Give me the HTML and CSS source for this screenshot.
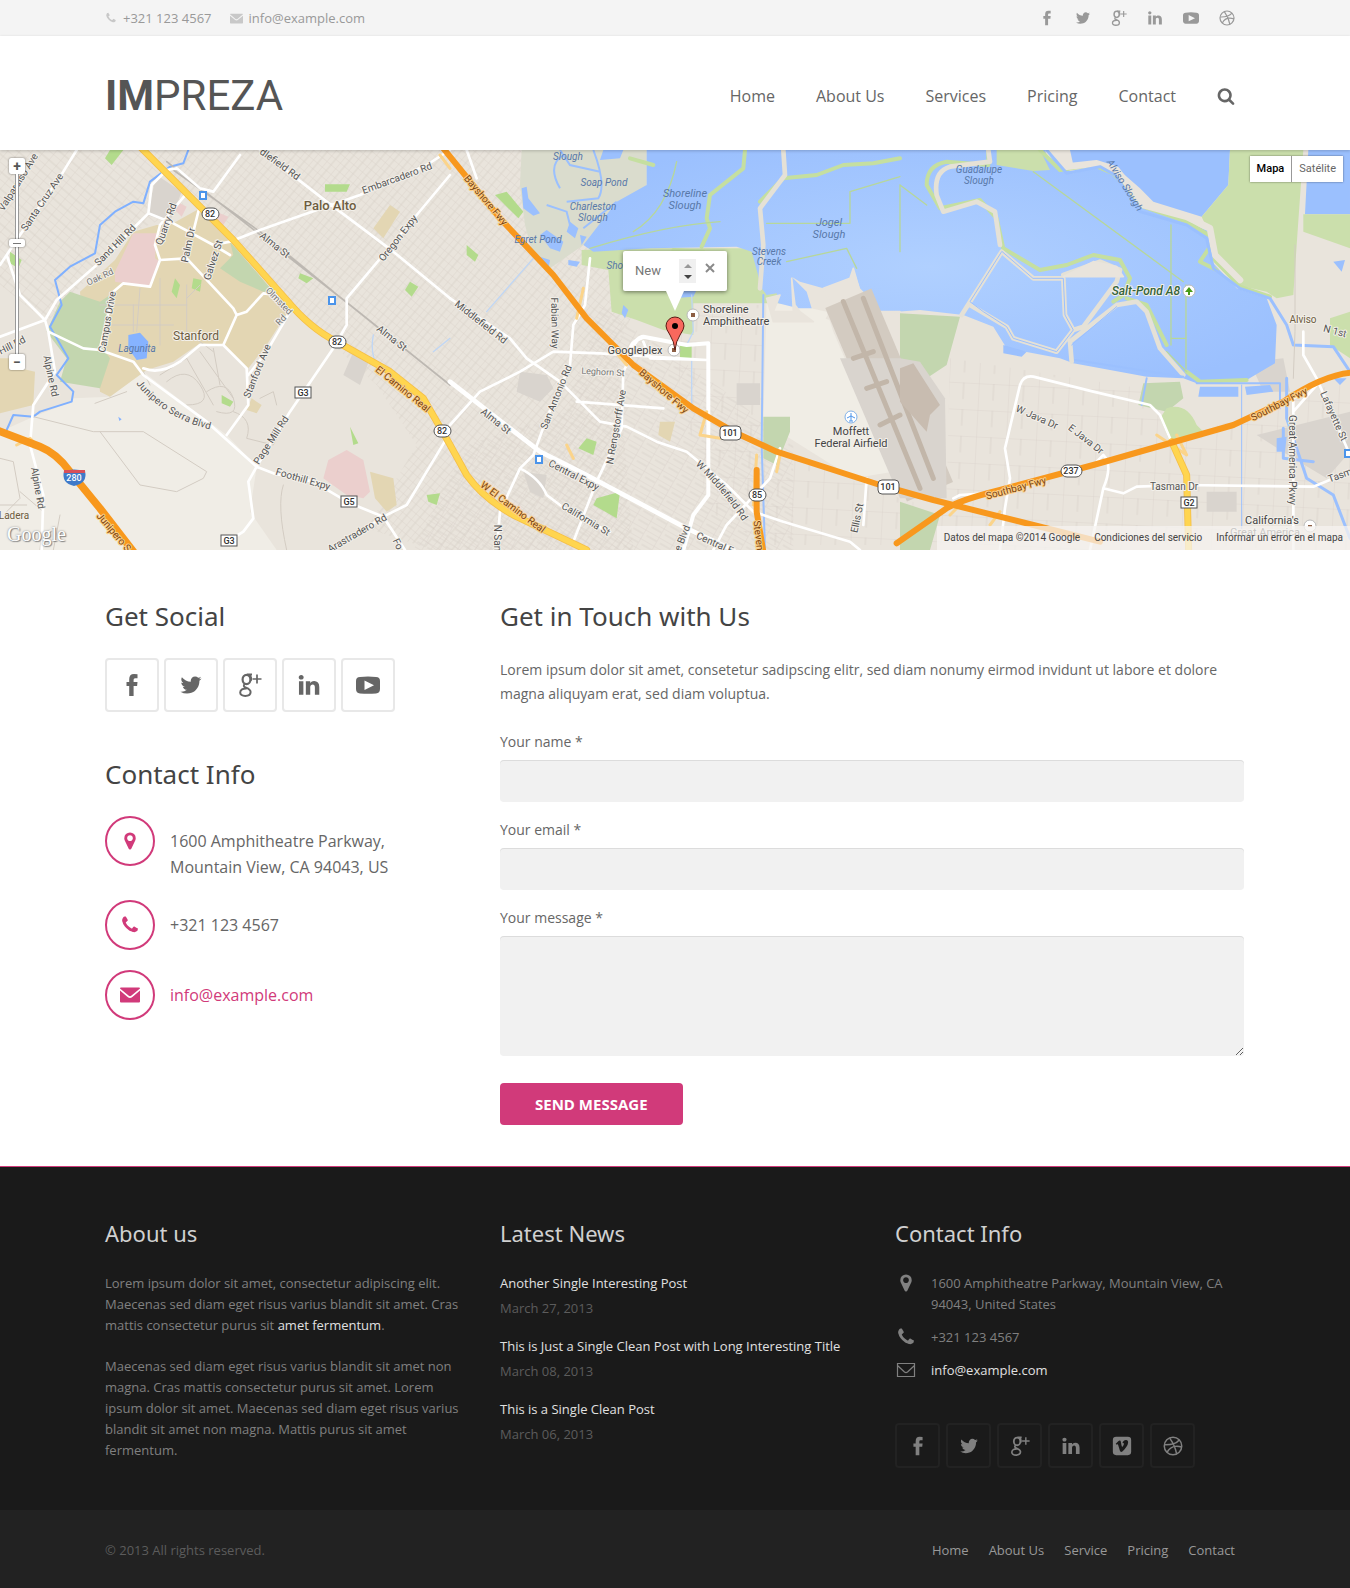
FILE: index.html
```html
<!DOCTYPE html>
<html lang="en">
<head>
<meta charset="utf-8">
<meta name="viewport" content="width=device-width, initial-scale=1">
<title>Contact - Impreza</title>
<link rel="stylesheet" href="styles.css">
</head>
<body>
<svg class="sprite" aria-hidden="true">
  <symbol id="i-facebook" viewBox="0 0 24 24"><path d="M17.500 1.200V5.200H15Q13.600 5.200 13.600 6.700V9H17.500L17.100 13H13.600V23H9.200V13H6.500V9H9.200V6.200Q9.200 1 14 1Q16.500 1 17.500 1.200Z"/></symbol>
  <symbol id="i-twitter" viewBox="0 0 1792 1792"><path d="M1684 408q-67 98-162 167 1 14 1 42 0 130-38 259.500t-115.500 248.500-184.500 210.500-258 146-323 54.500q-271 0-496-145 35 4 78 4 225 0 401-138-105-2-188-64.500t-114-159.500q33 5 61 5 43 0 85-11-112-23-185.500-111.500t-73.500-205.500v-4q68 38 146 41-66-44-105-115t-39-154q0-88 44-163 121 149 294.500 238.500t371.500 99.500q-8-38-8-74 0-134 94.500-228.500t228.500-94.500q140 0 236 102 109-21 205-78-37 115-142 178 93-10 186-50z"/></symbol>
  <symbol id="i-gplus" viewBox="0 0 24 24"><g fill="none" stroke="currentColor"><ellipse cx="8.500" cy="6.500" rx="3.900" ry="4.600" stroke-width="2.200"/><path d="M9 1.600h5M11 1.800c2 1.500 2.600 3.500 1.800 6M7 11c-2.200 1.600-1.200 2.700 1 3.600 3 1.200 4.600 2.200 4.600 4.400 0 2.400-2.200 3.900-5.400 3.900-3 0-5-1.300-5-3.500 0-2.600 2.600-4.200 6.600-4" stroke-width="2"/><path d="M19 1.500v9M14.500 6h9" stroke-width="1.700"/></g></symbol>
  <symbol id="i-linkedin" viewBox="0 0 1792 1792"><path d="M477 625v991h-330v-991h330zm21-306q1 73-50.500 122t-135.500 49h-2q-82 0-132-49t-50-122q0-74 51.500-122.500t134.500-48.500 133 48.500 51 122.500zm1166 729v568h-329v-530q0-105-40.500-164.500t-126.500-59.500q-63 0-105.500 34.500t-63.500 85.500q-11 30-11 81v553h-329q2-399 2-647t-1-296l-1-48h329v144h-2q20-32 41-56t56.500-52 87-43.500 114.500-15.500q171 0 275 113.500t104 332.500z"/></symbol>
  <symbol id="i-youtube" viewBox="0 0 24 24"><path fill-rule="evenodd" d="M4 4Q12 3 20 4Q24 4 24 8V16Q24 20 20 20.500Q12 21 4 20.500Q0 20 0 16V8Q0 4 4 4ZM8.500 7.500V17L18 12.200Z"/></symbol>
  <symbol id="i-dribbble" viewBox="0 0 24 24"><g fill="none" stroke="currentColor" stroke-width="1.800"><circle cx="12" cy="12" r="10.500"/><path d="M8 2.500C12 8 15 14 16.300 21.500M1.800 10.500C9 10.700 16 9 19.500 4.700M5 19.500C8 13 15 11 22.500 13.200"/></g></symbol>
  <symbol id="i-vimeo" viewBox="0 0 24 24"><path fill-rule="evenodd" d="M5 1H19Q23 1 23 5V19Q23 23 19 23H5Q1 23 1 19V5Q1 1 5 1ZM4.500 9.200L5.400 10.400C6.500 9.600 7 9.700 7.500 11.200L9.400 17.500C10 19.300 11.200 19.600 12.800 18.200C16 15.500 19 11.500 19.300 8.200C19.500 5.600 18.500 4.600 16.700 4.700C14.500 4.800 12.900 6.200 12.500 8.600C14.200 7.900 14.800 9 13.900 10.900C12.600 13.600 12 13.700 11.400 11.200L10.600 7C10.200 5.100 9 4.700 7.500 6.300Z"/></symbol>
  <symbol id="i-phone" viewBox="0 0 1792 1792"><path d="M1600 1240q0 27-10 70.500t-21 68.500q-21 50-122 106-94 51-186 51-27 0-52.500-3.500t-57.500-12.500-47.500-14.500-55.500-20.500-49-18q-98-35-175-83-128-79-264.500-215.500t-215.500-264.500q-48-77-83-175-3-9-18-49t-20.500-55.500-14.500-47.500-12.500-57.500-3.500-52.500q0-92 51-186 56-101 106-122 25-11 68.500-21t70.500-10q14 0 21 3 18 6 53 76 11 19 30 54t35 63.500 31 53.500q3 4 17.500 25t21.500 35.500 7 28.500q0 20-28.500 50t-62 55-62 53-28.500 46q0 9 5 22.500t8.500 20.500 14 24 11.500 19q76 137 174 235t235 174q2 1 19 11.500t24 14 20.500 8.500 22.500 5q18 0 46-28.500t53-62 55-62 50-28.500q14 0 28.500 7t35.500 21.500 25 17.500q25 15 53.500 31t63.500 35 54 30q70 35 76 53 3 7 3 21z"/></symbol>
  <symbol id="i-envelope" viewBox="0 0 20 20"><path d="M1 2.500H19Q20 2.500 20 3.500L11.500 10.600Q10 11.800 8.500 10.600L0 3.500Q0 2.500 1 2.500ZM0 5.600L7.600 12Q10 13.800 12.400 12L20 5.600V16.500Q20 17.500 19 17.500H1Q0 17.500 0 16.500Z"/></symbol>
  <symbol id="i-envelope-o" viewBox="0 0 20 20"><path d="M1.500 3.500H18.500V16.500H1.500ZM1.500 5.500L8.500 12Q10 13.200 11.500 12L18.500 5.500" fill="none" stroke="currentColor" stroke-width="1.200"/></symbol>
  <symbol id="i-marker" viewBox="0 0 1792 1792"><path d="M1152 640q0-106-75-181t-181-75-181 75-75 181 75 181 181 75 181-75 75-181zm256 0q0 109-33 179l-364 774q-16 33-47.500 52t-67.500 19-67.500-19-46.500-52l-365-774q-33-70-33-179 0-212 150-362t362-150 362 150 150 362z"/></symbol>
  <symbol id="i-search" viewBox="0 0 1792 1792"><path d="M1216 832q0-185-131.500-316.500t-316.500-131.500-316.500 131.500-131.500 316.500 131.500 316.500 316.500 131.500 316.500-131.500 131.500-316.500zm512 832q0 52-38 90t-90 38q-54 0-90-38l-343-342q-179 124-399 124-143 0-273.500-55.500t-225-150-150-225-55.500-273.500 55.500-273.500 150-225 225-150 273.500-55.500 273.500 55.500 225 150 150 225 55.500 273.500q0 220-124 399l343 343q37 37 37 90z"/></symbol>
</svg>

<div class="topbar">
  <div class="container topbar-row">
    <ul class="topbar-contacts">
      <li><svg class="icon icon-xs"><use href="#i-phone"/></svg><span>+321 123 4567</span></li>
      <li><svg class="icon icon-sm"><use href="#i-envelope"/></svg><a href="mailto:info@example.com">info@example.com</a></li>
    </ul>
    <ul class="topbar-social">
      <li><a href="#" aria-label="Facebook"><svg class="icon icon-md"><use href="#i-facebook"/></svg></a></li>
      <li><a href="#" aria-label="Twitter"><svg class="icon icon-md"><use href="#i-twitter"/></svg></a></li>
      <li><a href="#" aria-label="Google+"><svg class="icon icon-md"><use href="#i-gplus"/></svg></a></li>
      <li><a href="#" aria-label="LinkedIn"><svg class="icon icon-md"><use href="#i-linkedin"/></svg></a></li>
      <li><a href="#" aria-label="YouTube"><svg class="icon icon-md"><use href="#i-youtube"/></svg></a></li>
      <li><a href="#" aria-label="Dribbble"><svg class="icon icon-md"><use href="#i-dribbble"/></svg></a></li>
    </ul>
  </div>
</div>

<header class="header">
  <div class="container header-row">
    <a class="logo" href="#"><b>IM</b>PREZA</a>
    <nav class="nav" aria-label="Main">
      <a href="#">Home</a>
      <a href="#">About Us</a>
      <a href="#">Services</a>
      <a href="#">Pricing</a>
      <a href="#">Contact</a>
      <button class="search" type="button" aria-label="Search"><svg class="icon icon-search"><use href="#i-search"/></svg></button>
    </nav>
  </div>
</header>

<section class="map" aria-label="Map">
  <svg class="map-canvas" viewBox="0 0 1350 400" preserveAspectRatio="xMidYMid slice">
    <defs>
      <pattern id="gridA" width="34" height="22" patternUnits="userSpaceOnUse" patternTransform="rotate(40)"><path d="M0 0H34M0 0V22M17 0V22" class="street"/></pattern>
      <pattern id="gridB" width="46" height="30" patternUnits="userSpaceOnUse" patternTransform="rotate(30)"><path d="M0 0H46M0 0V30M12 15H46" class="street"/></pattern>
      <pattern id="gridC" width="90" height="80" patternUnits="userSpaceOnUse" patternTransform="rotate(3)"><path d="M0 0H90M0 0V80M45 0V50" class="street"/></pattern>
      <pattern id="gridD" width="40" height="28" patternUnits="userSpaceOnUse" patternTransform="rotate(-50)"><path d="M0 0H40M0 0V28M20 0V28" class="street"/></pattern>
      <radialGradient id="pond" cx="50%" cy="50%" r="60%"><stop offset="0" stop-color="#b0d0ff"/><stop offset="1" stop-color="#9bc0fe"/></radialGradient>
      <path id="serra" d="M139 231Q165 264 212 276"/>
      <path id="middle" d="M698 312Q722 334 746 369"/>
    </defs>
    <rect width="1350" height="400" fill="#e9e4dc"/>
    <g transform="scale(.33333) translate(0 -15)">
      <path fill="url(#gridD)" d="M0 15H420L560 190 400 260 140 530 0 420Z"/>
      <path fill="url(#gridA)" d="M450 15H1560L1900 500 1850 620 1900 1215H1300L1100 1150 1250 900 1130 720 870 480Z"/>
      <path fill="url(#gridB)" d="M1800 480L2150 720 2380 900V1215H1240L1400 900 1700 800Z"/>
      <path fill="url(#gridC)" d="M1980 480H2290V900L2380 940 2700 1060 3200 1200H2300L2130 1100ZM2850 640L3420 730 3600 860 4050 700V1215H3000L2840 1060Z"/>
      <path fill="#f0ede6" d="M220 760L330 755 430 680 560 780 680 870 770 965 750 1100 830 1215H0V860L100 815 215 770Z"/>
      <path fill="#f0ede5" d="M2300 460L2480 500 2500 560 2560 700 2680 980 2560 1000 2290 830Z"/>
      <path fill="#e3d6b3" d="M600 190L690 290 820 440 870 490 800 600 745 670 670 600 600 595 520 650 440 675 330 755 300 740 290 600 250 560 240 440 345 345 400 260 470 240 510 240ZM0 640H40L60 670 105 680 100 780 0 805ZM755 760L785 780 770 805 740 795ZM1110 980L1180 1000 1190 1080 1160 1100 1125 1060ZM1170 180L1200 200 1150 280 1120 250ZM1980 830H2025L2010 890 1975 870Z"/>
      <path fill="#ebcfcd" d="M400 265L470 265 465 340 480 350 445 425 345 410V380ZM1040 915L1090 945 1110 1040 1090 1060 1040 1050 970 1000 985 945ZM540 175L560 185 545 215 525 195ZM660 205L685 215 670 240 650 225Z"/>
      <path fill="#d9d4ce" d="M470 90L545 140 510 230 440 210ZM1060 620L1110 640 1080 720 1030 690ZM1560 680L1640 690 1660 730 1620 770 1550 740ZM2210 715H2280V780H2210ZM3770 870L4050 800V920L3980 1000 3880 940ZM3750 650L3850 640 3870 740 3790 740ZM3620 1040H3710V1100H3620ZM1570 980L1640 990 1630 1060 1590 1040Z"/>
      <path fill="#c3d6af" d="M180 470L210 440 300 470 345 440 300 600 330 640 300 730 180 710 200 640 140 560ZM690 290L820 440 790 440 720 410 660 370 700 330ZM2290 815H2370V860L2330 960 2290 940ZM2700 505L2880 515 2840 660 2780 700 2700 640ZM3430 715L3540 710 3550 760 3500 800 3415 780ZM2700 1070L2820 1110 2790 1215H2700Z"/>
      <path fill="#b3db8c" d="M525 400L540 420 530 460 515 440ZM330 15H370L335 60 315 40ZM580 400L605 405 600 440 575 430ZM900 385L940 400 920 415 895 400ZM1230 410L1255 425 1235 455 1215 435ZM975 118H1050L1040 140 975 140ZM1050 845L1075 895 1060 900ZM665 750L700 770 690 785 665 775ZM1485 150L1520 140 1570 200 1555 220ZM1400 300L1435 330 1425 350 1400 330ZM1760 880L1790 890 1780 930 1735 910ZM1790 1060L1860 1040 1850 1120 1780 1080ZM30 320L65 345 55 370 30 355ZM1280 1050L1320 1045 1310 1080 1285 1070ZM2040 600H2075V640H2040Z"/>
      <path fill="#cbdfac" d="M1745 315L1850 310 2350 310 2390 440 2370 475H2080V570L1990 555 1910 525 1835 500 1825 375 1745 360ZM3500 790Q3560 770 3590 840L3620 870 3510 890 3480 820Z"/>
      <path fill="#dadccd" d="M1565 15H1940V120L1750 300 1650 370 1600 330 1575 240 1560 120Z"/>
      <path fill="#9bc0fe" d="M1565 130L1580 125 1585 160 1620 205 1600 212 1570 190ZM1620 270L1640 255 1690 290 1680 320 1650 310ZM1710 230L1735 250 1725 280 1700 260ZM1740 270L1760 275 1745 300ZM1810 15H1870L1860 40 1800 45ZM1620 335L1650 345 1645 375 1625 360ZM1705 345L1740 350 1730 365 1705 360ZM1870 480L1885 495 1875 520 1865 505ZM2020 440L2090 435 2080 455 2020 460Z"/>
      <path fill="none" stroke="#9bc0fe" stroke-width="6" d="M1780 15Q1820 120 1795 160L1700 170M1680 15L1710 60 1800 80M1750 250L1850 170M1690 30Q1640 60 1680 130M1640 180L1700 200 1710 240"/>
      <path fill="url(#pond)" d="M1940 15V120L1850 170 1750 300 1780 320 1950 310 2210 305 2255 320 2285 430 2300 450 2330 445 2335 475 2395 490 2435 490 2420 440 2375 395 2400 410 2470 430 2550 405 2560 370 2580 430 2620 470 2630 505 2760 495 2890 510 2980 545 3020 610 3180 640 3220 655 3440 695 3550 700 3590 715 3740 705 3825 655 3830 540 3800 460 3710 430 3640 355 3630 260 3580 240 3430 190 3350 80 3300 60 3220 85 3140 30 3135 15Z"/>
      <path fill="#9bc0fe" d="M3210 15H3690L3685 120 3605 215 3460 170 3420 130 3340 60 3220 60ZM3925 15H4050V208H3915ZM3600 725H3715V755H3595ZM3735 725L3810 720 3820 740 3740 750ZM3010 600L3080 620 3065 635 3010 625ZM4000 350L4035 345 4025 380ZM3830 880L3860 875 3855 920 3830 920ZM4000 700L4040 700 4020 720Z"/>
      <path fill="#cbdfac" d="M3690 15H3910L3890 300 3880 450 3830 460 3800 440 3710 420 3640 350 3630 270 3605 215 3685 120ZM3910 208H4050V310L3910 260ZM2990 15H3120L3150 75 3100 78 2990 60ZM3990 520L4050 500V640L3990 600Z"/>
      <g fill="none" stroke-linejoin="round" stroke-linecap="round">
        <g stroke="#c5dfa0" stroke-width="12">
          <path d="M3120 15L3180 75 3280 60 3340 85 3430 185 3560 230 3635 275 3645 345 3720 425 3810 455M3640 290L3600 350 3650 375"/>
          <path d="M2965 15V60L2840 50Q2780 60 2780 120L2820 190 2940 165 2990 220 3010 310 3120 375 3200 360 3280 330 3360 345 3390 400 3370 450 3340 470M3380 460L3440 480 3480 560 3500 600"/>
          <path d="M2235 15L2230 70 2130 150 2120 220 2130 250 2105 305M1890 40L1960 60M2280 170L2350 100 2450 90 2530 60 2620 55 2700 40"/>
          <path d="M2110 320L2020 315M3560 680L3600 710 3740 705"/>
        </g>
        <g stroke="#b7d79a" stroke-width="4">
          <path d="M2700 120L2780 180M3100 80L3550 410M3513 240V600M3558 420V670M3513 580H3558M2550 235V140L2700 95M2300 235H2550M2700 120V320M2360 350L2540 310 2570 370M2160 230Q2000 240 1770 310M2030 50Q2000 200 1900 260M3500 620L3560 680"/>
        </g>
        <path stroke="#e9e4dc" stroke-width="20" d="M3150 15L3200 65 3290 55 3350 75 3430 180 3560 215 3630 250 3645 330 3720 405"/>
        <path stroke="#9bc0fe" stroke-width="9" d="M3140 15L3200 85 3300 65 3345 90 3420 200 3560 240 3620 280 3640 370 3720 430 3810 460 3860 540 3880 600 4000 605 4050 680M3860 700V820L3920 1000 4000 1050 4050 1180M3850 850V940L3940 950"/>
        <g stroke="#e5e1d6" stroke-width="14">
          <path d="M2350 15L2355 90 2280 190 2290 300 2280 430M2965 15L2970 50 2850 65Q2800 80 2810 150L2830 200 2930 170 2985 200 3000 300"/>
          <path d="M3005 320L2910 470 2885 510M3005 320L3100 400 3190 400 3195 510 3220 555 3170 620 3040 580 3020 545 2910 480M3220 555L3250 545 3350 410M3350 480L3410 470 3440 500 3480 610 3550 690M3350 480L3210 590 3215 650M3190 390L3300 350 3360 375 3350 410"/>
        </g>
        <g stroke="#9bc0fe" stroke-width="3">
          <path d="M3005 320L2910 470 2950 500 3020 545 3040 580 3170 620 3220 555 3195 510 3190 400 3100 400ZM3215 600L3350 485M3725 720V1190"/>
        </g>
        <path fill="#e9e4dc" stroke="#e9e4dc" stroke-width="5" d="M3190 395L3280 350 3350 365 3370 395ZM2300 460L2340 450 2320 500 2400 500 2440 530 2320 530ZM2375 400L2385 480 2400 500 2380 500ZM2470 430L2550 400 2560 370 2580 440 2630 500 2700 500 2600 560 2480 520 2500 490Z"/>
        <path stroke="#d3cbc1" stroke-width="150" stroke-linecap="butt" d="M2545 460L2790 1040"/>
        <path fill="#d9d4ce" stroke="none" d="M2520 640L2700 1060 2840 1060 2835 760 2760 650 2700 640Z"/>
        <path stroke="#c2b6a9" stroke-width="15" d="M2530 470L2760 1030M2590 460L2800 1000M2560 640L2620 620M2600 730L2660 710M2640 840L2700 810"/>
        <path fill="#c8bcb0" stroke="none" d="M2700 670L2740 655 2820 780 2790 810 2780 860 2700 770Z"/>
        <g stroke="#7fb0ff" stroke-width="6">
          <path d="M565 15L550 55 510 65 450 110 430 175 400 170 345 200 300 240 285 325 210 365 165 405 185 480 150 545 205 640 170 690 220 740 215 770 120 800 100 815 40 810 20 855"/>
          <path d="M2290 450L2285 900 2295 1215M3440 700L3425 780M3225 645L3550 695M3590 715H3840V790" stroke="#9bc0fe"/>
          <path d="M2075 450L2080 560 2060 600M1120 570Q1110 620 1130 660M1300 620L1350 580M2075 640V780M1460 500L1600 340" stroke="#bfd6f5" stroke-width="4"/>
        </g>
        <path fill="#86b3ff" stroke="none" d="M385 570L420 563 445 590 440 640 410 645 385 610ZM355 815L365 823 358 828Z"/>
        <g stroke="#d3ccc3" stroke-width="3">
          <path d="M285 775L380 740M100 815L280 860 430 860 620 980 610 1000 530 1040 420 1020 300 860M450 720L430 680M500 710Q560 660 600 720T560 780M620 740Q680 700 700 760T650 800M700 800Q760 820 740 880L820 900 860 820M480 690L560 640M600 620L700 760M640 610L660 720M560 640L640 780M780 760L820 740 830 780M0 940L40 950 60 1060 20 1100M60 1040L130 1100 120 1215M180 1110L160 1215M850 1020Q830 1080 860 1215M0 1080H80"/>
          <path d="M300 480H560M320 540H520M480 400V600M400 480V560M560 420V560L640 620M600 420L560 460M420 430L410 560"/>
          <path d="M500 50L1050 480 1350 720M520 75L780 260 1000 440" stroke-width="5" stroke="#bdb8b2"/>
          <path d="M3885 300V560L3880 700"/>
        </g>
        <g stroke="#fff" stroke-width="8">
          <path d="M230 15L190 80 60 270 0 360M0 575L135 525 170 465 290 360 410 240 445 205 455 120 500 75 530 70 600 130 640 140 720 30M445 205L520 235 640 300 690 290 780 255 880 220 1080 150 1280 60 1350 15M20 330L60 450 135 525 145 560 250 610 300 615 400 650 430 690 620 830 770 965 820 985 940 1010 1050 1075 1150 1115 1215 1215M560 145L480 240 465 300 480 345 560 340 700 490 710 510 670 600 740 670 745 780 680 870M480 345L450 425 370 415 340 440 300 610M580 260L600 180M690 330L640 300M710 510L740 500 790 445 830 450M430 670Q480 690 540 650L600 600 670 600M870 500L800 620 745 690M1040 460V540L1000 610 870 800 770 965 745 1010 760 1120 730 1160 690 1185M1350 90L1200 270 1040 460M145 560L165 680 100 780 90 900 130 1050 125 1215M1340 880L1220 1080 1150 1115 1000 1215M780 15L980 170 1180 320 1350 460"/>
          <path d="M1350 460L1530 580 1580 640 1680 710 1740 770 1800 830 1880 845 1970 890 2060 920 2180 1020 2260 1100 2350 1130 2550 1190 2580 1215M1350 840L1440 740 1560 680 1660 620 1800 625 2120 645M1770 340L1755 480 1720 540 1710 660 1640 820 1600 930 1560 970 1500 1100 1490 1215M1560 970Q1620 1000 1640 1050L1720 1110 1830 1160M1870 680L1865 850 1790 1010 1720 1190M1730 770L1990 790M1400 15L1430 100M1925 580Q1880 590 1890 640L1865 690M1930 590L1950 640 2120 645M2340 910L2310 1000 2180 1140 2140 1215M2590 1140L2600 1000"/>
          <path d="M1890 620Q1910 575 1930 575L2060 600 2125 595V1050L2080 1110 2050 1215" stroke-width="12"/>
          <path d="M1350 710L1620 920 1750 985 2060 1150 2200 1215" stroke-width="14"/>
          <path d="M3000 1215L3015 1090 3030 1000 3015 910 3060 720Q3070 690 3100 695L3280 740 3450 780 3480 810 3510 880M3290 950L3310 930Q3340 960 3310 1030L3270 1215M3310 1030L3370 1045 3410 1025 3550 1020 3940 1025 4050 980M2860 1060L2880 1050 2960 1045M3910 560V630L3950 700 4050 930M3880 1215V760L3950 710M3950 720L3880 800"/>
        </g>
        <g stroke="#fbd48a" stroke-width="9"><path d="M50 900L90 880 120 910M1750 430L1730 520M1830 600L1880 660M2120 800L2100 870 2160 880M2270 930L2260 1080M2340 930L2330 980M3470 870L3560 930 3530 870M2850 1110L2900 1060M3000 1100L2970 1140M1700 900L1720 940M1320 30L1350 70"/></g>
        <path stroke="#f5bf48" stroke-width="21" d="M415 0L700 285 860 465Q930 550 1010 590L1170 680 1270 760 1345 890 1400 990Q1450 1060 1540 1110L1760 1215M3515 890L3560 990 3566 1215"/>
        <path stroke="#ffd54f" stroke-width="16" d="M415 0L700 285 860 465Q930 550 1010 590L1170 680 1270 760 1345 890 1400 990Q1450 1060 1540 1110L1760 1215M3515 890L3560 990 3566 1215"/>
        <g stroke="#f8981d" stroke-width="18">
          <path d="M1330 10L1500 220 1660 390 1760 520 1900 660 2080 790 2200 860 2330 920 2640 1020 2800 1065 3100 1140 3300 1190M2690 1195L2840 1090Q2880 1065 3000 1035L3280 960 3700 840 3850 770Q3970 690 4055 683M2270 975V1100L2290 1220"/>
          <path stroke-width="23" d="M-10 855L120 905Q170 925 210 980L300 1090 400 1220"/>
        </g>
      </g>
    </g>

    <!-- road shields and place pins -->
    <g class="shields">
      <g fill="#fff" stroke="#555">
        <rect x="202" y="58" width="17" height="12" rx="6"/><rect x="329" y="186" width="17" height="12" rx="6"/><rect x="434" y="275" width="17" height="12" rx="6"/><rect x="749" y="339" width="17" height="12" rx="6"/><rect x="1061" y="315" width="21" height="12" rx="6"/>
        <rect x="720" y="276" width="21" height="14" rx="4"/><rect x="878" y="330" width="21" height="14" rx="4"/>
        <rect x="295" y="237" width="16" height="11"/><rect x="341" y="346" width="16" height="11"/><rect x="221" y="385" width="16" height="11"/><rect x="1181" y="347" width="16" height="11"/>
      </g>
      <path d="M64 321Q74 318 85 321Q88 333 74 336Q61 333 64 321Z" fill="#3f7ac9"/><path d="M64 320H85V323H64Z" fill="#d9505a"/>
      <text x="210" y="64">82</text><text x="337" y="192">82</text><text x="442" y="281">82</text><text x="757" y="345">85</text><text x="1071" y="321">237</text><text x="730" y="283">101</text><text x="888" y="337">101</text><text x="303" y="243">G3</text><text x="349" y="352">G5</text><text x="229" y="391">G3</text><text x="1189" y="353">G2</text><text x="74" y="328" class="on-blue">280</text>
      <g fill="#fff" stroke="#4b94ea" stroke-width="2"><rect x="200" y="42" width="6" height="7"/><rect x="329" y="147" width="6" height="7"/><rect x="536" y="306" width="6" height="7"/><rect x="1345" y="300" width="6" height="7"/></g>
      <g fill="#fff" stroke="#bbb"><circle cx="693" cy="165" r="6"/><circle cx="674" cy="200" r="6"/><circle cx="1189" cy="141" r="6"/><circle cx="1310" cy="376" r="6"/><circle cx="851" cy="267" r="6" stroke="#7fb0e8"/></g>
      <path d="M691 163h4v4h-4zM672 198h4v4h-4zM1308 375h4v2h-4z" fill="#8d5f45"/>
      <path d="M1189 137l4 5h-3v3h-2v-3h-3z" fill="#4a9b18"/>
      <path d="M851 263v8M847 268l4-2 4 2M849 271h4" stroke="#4b94ea" fill="none"/>
    </g>

    <g class="labels">
      <text transform="translate(18 32) rotate(-58)">Valparaiso Ave</text>
      <text transform="translate(42 52) rotate(-56)">Santa Cruz Ave</text>
      <text transform="translate(115 95) rotate(-45)">Sand Hill Rd</text>
      <text class="minor" transform="translate(100 127) rotate(-25)">Oak Rd</text>
      <text transform="translate(166 74) rotate(-70)">Quarry Rd</text>
      <text transform="translate(188 95) rotate(-78)">Palm Dr</text>
      <text transform="translate(213 110) rotate(-72)">Galvez St</text>
      <text transform="translate(107 172) rotate(-80)">Campus Drive</text>
      <text transform="translate(397 28) rotate(-20)">Embarcadero Rd</text>
      <text transform="translate(280 14) rotate(36)">dlefield Rd</text>
      <text transform="translate(398 88) rotate(-52)">Oregon Expy</text>
      <text transform="translate(275 95) rotate(38)">Alma St</text>
      <text transform="translate(392 188) rotate(38)">Alma St</text>
      <text class="minor" transform="translate(279 151) rotate(46)">Olmsted</text>
      <text class="minor" transform="translate(281 170) rotate(-45)">Rd</text>
      <text transform="translate(257 221) rotate(-68)">Stanford Ave</text>
      <text transform="translate(271 290) rotate(-57)">Page Mill Rd</text>
      <text transform="translate(303 329) rotate(16)">Foothill Expy</text>
      <text transform="translate(51 226) rotate(78)">Alpine Rd</text>
      <text transform="translate(38 338) rotate(80)">Alpine Rd</text>
      <text transform="translate(12 195) rotate(-27)">Hill Rd</text>
      <text transform="translate(357 383) rotate(-30)">Arastradero Rd</text>
      <text transform="translate(398 394) rotate(65)">Fo</text>
      <text class="flow"><textPath href="#serra">Junipero Serra Blvd</textPath></text>
      <text class="hwy" transform="translate(403 239) rotate(39)">El Camino Real</text>
      <text class="hwy" transform="translate(114 382) rotate(50)">Junipero S</text>
      <text class="town" x="330" y="55">Palo Alto</text>
      <text class="town light" x="196" y="186">Stanford</text>
      <text class="town small" x="14" y="365">Ladera</text>
      <text class="water" x="137" y="198">Lagunita</text>

      <text class="water" x="568" y="6">Slough</text>
      <text class="water" x="604" y="32">Soap Pond</text>
      <text class="water" x="593" y="56">Charleston</text><text class="water" x="593" y="67">Slough</text>
      <text class="water big" x="685" y="43">Shoreline</text><text class="water big" x="685" y="55">Slough</text>
      <text class="water big" x="829" y="72">Jogel</text><text class="water big" x="829" y="84">Slough</text>
      <text class="water" x="538" y="89">Egret Pond</text>
      <text class="water" x="769" y="101">Stevens</text><text class="water" x="769" y="111">Creek</text>
      <text class="water" x="619" y="115">Shore</text>
      <text class="hwy" transform="translate(486 50) rotate(50)">Bayshore Fwy</text>
      <text class="hwy" transform="translate(664 241) rotate(41)">Bayshore Fwy</text>
      <text class="hwy" transform="translate(513 357) rotate(37)">W El Camino Real</text>
      <text class="hwy" transform="translate(759 388) rotate(83)">Stevens</text>
      <text transform="translate(481 172) rotate(38)">Middlefield Rd</text>
      <text transform="translate(555 173) rotate(89)">Fabian Way</text>
      <text transform="translate(556 247) rotate(-68)">San Antonio Rd</text>
      <text class="minor" transform="translate(603 222) rotate(3)">Leghorn St</text>
      <text transform="translate(616 277) rotate(-80)">N Rengstorff Ave</text>
      <text transform="translate(496 271) rotate(38)">Alma St</text>
      <text transform="translate(574 325) rotate(27)">Central Expy</text>
      <text transform="translate(586 369) rotate(31)">California St</text>
      <text transform="translate(497 388) rotate(90)">N San</text>
      <text class="flow"><textPath href="#middle">W Middlefield Rd</textPath></text>
      <text transform="translate(715 393) rotate(24)">Central E</text>
      <text transform="translate(682 388) rotate(-68)">e Blvd</text>
      <text class="poi" x="635" y="200">Googleplex</text>
      <text class="poi start" x="703" y="159">Shoreline</text><text class="poi start" x="703" y="171">Amphitheatre</text>
      <text class="poi" x="851" y="281">Moffett</text><text class="poi" x="851" y="293">Federal Airfield</text>
      <text transform="translate(857 368) rotate(-78)">Ellis St</text>

      <text class="water" x="979" y="19">Guadalupe</text><text class="water" x="979" y="30">Slough</text>
      <text class="water" transform="translate(1125 35) rotate(58)">Alviso Slough</text>
      <text class="park" x="1146" y="141">Salt-Pond A8</text>
      <text class="town small" x="1303" y="169">Alviso</text>
      <text transform="translate(1335 181) rotate(15)">N 1st</text>
      <text transform="translate(1037 267) rotate(24)">W Java Dr</text>
      <text transform="translate(1086 289) rotate(38)">E Java Dr</text>
      <text class="hwy" transform="translate(1016 338) rotate(-15)">Southbay Fwy</text>
      <text class="hwy" transform="translate(1279 254) rotate(-27)">Southbay Fwy</text>
      <text x="1174" y="336">Tasman Dr</text>
      <text transform="translate(1340 325) rotate(-20)">Tasm</text>
      <text transform="translate(1292 310) rotate(90)">Great America Pkwy</text>
      <text transform="translate(1334 266) rotate(66)">Lafayette St</text>
      <text class="poi" x="1272" y="370">California's</text><text class="poi" x="1265" y="382">Great America</text>
    </g>
    <path d="M675 200Q674 191 670 185Q666 179 666 176A9 9 0 0 1 684 176Q684 179 680 185Q676 191 675 200Z" fill="#f8685d" stroke="#5b1913"/>
    <circle cx="675" cy="176" r="3"/>
  </svg>

  <div class="zoom">
    <button type="button" aria-label="Zoom in">+</button>
    <input type="range" min="0" max="100" value="62" aria-label="Zoom level">
    <button type="button" aria-label="Zoom out">−</button>
  </div>
  <div class="map-types">
    <button type="button" class="is-active">Mapa</button>
    <button type="button">Satélite</button>
  </div>
  <div class="info-window">
    <span>New</span>
    <span class="spinner"><i class="up"></i><i class="down"></i></span>
    <button type="button" aria-label="Close"><svg width="10" height="10" viewBox="0 0 10 10"><path d="M1 1L9 9M9 1L1 9" stroke="#8a8a8a" stroke-width="2"/></svg></button>
  </div>
  <span class="google">Google</span>
  <div class="map-legal">
    <span>Datos del mapa ©2014 Google</span>
    <a href="#">Condiciones del servicio</a>
    <a href="#">Informar un error en el mapa</a>
  </div>
</section>

<main class="container main">
  <aside>
    <h2>Get Social</h2>
    <ul class="social">
      <li><a href="#" aria-label="Facebook"><svg class="icon icon-lg"><use href="#i-facebook"/></svg></a></li>
      <li><a href="#" aria-label="Twitter"><svg class="icon icon-lg"><use href="#i-twitter"/></svg></a></li>
      <li><a href="#" aria-label="Google+"><svg class="icon icon-lg"><use href="#i-gplus"/></svg></a></li>
      <li><a href="#" aria-label="LinkedIn"><svg class="icon icon-lg"><use href="#i-linkedin"/></svg></a></li>
      <li><a href="#" aria-label="YouTube"><svg class="icon icon-lg"><use href="#i-youtube"/></svg></a></li>
    </ul>
    <h2>Contact Info</h2>
    <ul class="contacts">
      <li><span class="ring"><svg class="icon icon-round"><use href="#i-marker"/></svg></span><p>1600 Amphitheatre Parkway,<br>Mountain View, CA 94043, US</p></li>
      <li><span class="ring"><svg class="icon icon-round"><use href="#i-phone"/></svg></span><p>+321 123 4567</p></li>
      <li><span class="ring"><svg class="icon icon-round"><use href="#i-envelope"/></svg></span><p><a href="mailto:info@example.com">info@example.com</a></p></li>
    </ul>
  </aside>
  <section>
    <h2>Get in Touch with Us</h2>
    <p class="intro">Lorem ipsum dolor sit amet, consetetur sadipscing elitr, sed diam nonumy eirmod invidunt ut labore et dolore magna aliquyam erat, sed diam voluptua.</p>
    <form class="form">
      <div class="field"><label for="name">Your name *</label><input id="name" type="text"></div>
      <div class="field"><label for="email">Your email *</label><input id="email" type="email"></div>
      <div class="field"><label for="message">Your message *</label><textarea id="message"></textarea></div>
      <button class="send" type="submit">SEND MESSAGE</button>
    </form>
  </section>
</main>

<footer>
  <div class="footer-top">
    <div class="container footer-grid">
      <section class="about">
        <h3>About us</h3>
        <p>Lorem ipsum dolor sit amet, consectetur adipiscing elit. Maecenas sed diam eget risus varius blandit sit amet. Cras mattis consectetur purus sit <a href="#">amet fermentum</a>.</p>
        <p>Maecenas sed diam eget risus varius blandit sit amet non magna. Cras mattis consectetur purus sit amet. Lorem ipsum dolor sit amet. Maecenas sed diam eget risus varius blandit sit amet non magna. Mattis purus sit amet fermentum.</p>
      </section>
      <section>
        <h3>Latest News</h3>
        <ul class="news">
          <li><a href="#">Another Single Interesting Post</a><span>March 27, 2013</span></li>
          <li><a href="#">This is Just a Single Clean Post with Long Interesting Title</a><span>March 08, 2013</span></li>
          <li><a href="#">This is a Single Clean Post</a><span>March 06, 2013</span></li>
        </ul>
      </section>
      <section>
        <h3>Contact Info</h3>
        <ul class="footer-contacts">
          <li><svg class="icon icon-foot"><use href="#i-marker"/></svg><span>1600 Amphitheatre Parkway, Mountain View, CA 94043, United States</span></li>
          <li><svg class="icon icon-foot"><use href="#i-phone"/></svg><span>+321 123 4567</span></li>
          <li><svg class="icon icon-foot"><use href="#i-envelope-o"/></svg><a href="mailto:info@example.com">info@example.com</a></li>
        </ul>
        <ul class="social dark">
          <li><a href="#" aria-label="Facebook"><svg class="icon icon-foot"><use href="#i-facebook"/></svg></a></li>
          <li><a href="#" aria-label="Twitter"><svg class="icon icon-foot"><use href="#i-twitter"/></svg></a></li>
          <li><a href="#" aria-label="Google+"><svg class="icon icon-foot"><use href="#i-gplus"/></svg></a></li>
          <li><a href="#" aria-label="LinkedIn"><svg class="icon icon-foot"><use href="#i-linkedin"/></svg></a></li>
          <li><a href="#" aria-label="Vimeo"><svg class="icon icon-foot"><use href="#i-vimeo"/></svg></a></li>
          <li><a href="#" aria-label="Dribbble"><svg class="icon icon-foot"><use href="#i-dribbble"/></svg></a></li>
        </ul>
      </section>
    </div>
  </div>
  <div class="footer-bottom">
    <div class="container footer-row">
      <span>© 2013 All rights reserved.</span>
      <nav class="footer-nav" aria-label="Footer">
        <a href="#">Home</a>
        <a href="#">About Us</a>
        <a href="#">Service</a>
        <a href="#">Pricing</a>
        <a href="#">Contact</a>
      </nav>
    </div>
  </div>
</footer>
</body>
</html>
```
FILE: styles.css
```css
* { box-sizing: border-box; }
body { margin: 0; background: #fff; color: #666; font: 14px/24px "Open Sans", "Noto Sans", sans-serif; }
h2, h3, p, ul { margin: 0; padding: 0; }
ul { list-style: none; }
a { color: inherit; text-decoration: none; }
button { font: inherit; color: inherit; border: 0; background: none; padding: 0; cursor: pointer; }
.sprite { display: none; }
.container { width: 100%; max-width: 1140px; margin: 0 auto; }

.icon { display: block; flex: none; fill: currentColor; }
.icon-xs { width: 12px; height: 12px; }
.icon-sm { width: 13px; height: 13px; }
.icon-md { width: 16px; height: 16px; }
.icon-search { width: 18px; height: 18px; }
.icon-round { width: 20px; height: 20px; }
.icon-foot { width: 20px; height: 20px; }
.icon-lg { width: 24px; height: 24px; }

/* top bar */
.topbar { background: #f4f4f4; color: #999; font-size: 13px; }
.topbar-row { display: flex; justify-content: space-between; align-items: center; height: 36px; padding-right: 10px; }
.topbar-contacts { display: flex; gap: 18px; }
.topbar-contacts li { display: flex; align-items: center; gap: 6px; }
.topbar-contacts .icon { color: #c8c8c8; }
.topbar-social { display: flex; gap: 20px; }

/* header */
.header { position: relative; z-index: 1; background: #fff; box-shadow: 0 1px 3px rgba(0, 0, 0, .2); }
.header-row { display: flex; justify-content: space-between; align-items: center; height: 114px; padding: 6px 10px 0 0; }
.logo { font: 400 42px/50px Roboto, "Liberation Sans", sans-serif; color: #555; }
.logo b { font-weight: 700; }
.nav { display: flex; align-items: center; gap: 41px; font-size: 16px; }

/* map */
.map { position: relative; height: 400px; overflow: hidden; background: #e9e4dc; font-family: Roboto, sans-serif; }
.map-canvas { display: block; width: 100%; height: 100%; }
.street { fill: none; stroke: #d6cfc7; stroke-width: 2px; }
.labels text { font-size: 10px; fill: #555; text-anchor: middle; dominant-baseline: central; paint-order: stroke; stroke: #f3f0ea; stroke-width: 2px; stroke-linejoin: round; }
.labels .flow, .labels .start { text-anchor: start; }
.labels .minor { font-size: 9px; fill: #777; }
.labels .hwy { fill: #7c4310; stroke: #fbcf87; }
.labels .town { font-size: 13px; font-weight: 500; fill: #6d5c40; }
.labels .light { font-size: 12px; font-weight: 400; }
.labels .small { font-size: 10px; font-weight: 400; }
.labels .water { font-style: italic; fill: #5878a8; stroke: none; }
.labels .big { font-size: 11px; }
.labels .poi { font-size: 11px; fill: #444; }
.labels .park { font-size: 12px; font-style: italic; fill: #33633b; font-weight: 500; }
.shields text { font-size: 9px; font-weight: 500; fill: #333; text-anchor: middle; dominant-baseline: central; }
.shields .on-blue { fill: #fff; }

.zoom { position: absolute; left: 9px; top: 8px; display: flex; flex-direction: column; align-items: center; width: 16px; }
.zoom button { width: 16px; height: 16px; border-radius: 2px; background: #fff; box-shadow: 0 0 2px rgba(0, 0, 0, .6); color: #555; font: 700 14px/16px Roboto, sans-serif; }
.zoom input { appearance: none; writing-mode: vertical-lr; direction: rtl; width: 16px; height: 180px; margin: 0; background: linear-gradient(#fff, #fff) center / 2px 100% no-repeat, linear-gradient(#999, #999) center / 4px 100% no-repeat; }
.zoom input::-webkit-slider-thumb { appearance: none; width: 16px; height: 8px; border: 0; border-radius: 2px; background: linear-gradient(#777, #777) center / 8px 1px no-repeat, #fff; box-shadow: 0 0 2px rgba(0, 0, 0, .6); }

.map-types { position: absolute; right: 7px; top: 6px; display: flex; height: 26px; background: #fff; box-shadow: 0 0 2px rgba(0, 0, 0, .5); font-size: 11px; color: #666; }
.map-types button { padding: 0 7px; }
.map-types .is-active { color: #000; font-weight: 500; border-right: 1px solid #999; }

.info-window { position: absolute; left: 50%; top: 101px; display: flex; align-items: center; width: 104px; height: 40px; margin-left: -52px; padding: 0 12px; border-radius: 2px; background: #fff; box-shadow: 0 1px 4px rgba(0, 0, 0, .5); font-size: 13px; color: #777; }
.info-window::after { content: ""; position: absolute; left: 43px; top: 40px; border: 9px solid transparent; border-top: 20px solid #fff; border-bottom: 0; }
.info-window button { margin: -6px 0 0 9px; }
.info-window button svg { display: block; }
.spinner { display: flex; flex-direction: column; justify-content: center; align-items: center; gap: 7px; width: 17px; height: 24px; margin-left: auto; background: #f0f0f0; }
.spinner i { border: 4px solid transparent; }
.spinner .up { border-top: 0; border-bottom-color: #999; }
.spinner .down { border-bottom: 0; border-top-color: #444; }

.google { position: absolute; left: 7px; bottom: 4px; color: #fff; font: 20px/24px "Liberation Serif", serif; text-shadow: 0 0 2px #777, 1px 1px 1px #888; }
.map-legal { position: absolute; right: 0; bottom: 0; display: flex; align-items: center; height: 24px; padding: 0 7px; background: rgba(245, 243, 240, .75); color: #444; font-size: 10px; }
.map-legal > * + * { margin-left: 14px; }

/* main */
.main { display: grid; grid-template-columns: 350px 1fr; column-gap: 45px; padding: 50px 1px 41px 0; }
h2 { color: #444; font: 400 26px/32px "Noto Sans", sans-serif; }
.social { display: flex; gap: 5px; margin: 26px 0 46px; }
.social a { display: flex; align-items: center; justify-content: center; width: 54px; height: 54px; border: 2px solid #e8e8e8; border-radius: 4px; }
.contacts { display: grid; gap: 20px; margin-top: 26px; font-size: 16px; line-height: 26px; }
.contacts li { display: flex; gap: 15px; }
.contacts p { padding-top: 12px; }
.contacts a, .ring { color: #d13a7a; }
.ring { flex: none; display: flex; align-items: center; justify-content: center; width: 50px; height: 50px; border: 2px solid; border-radius: 50%; }
.intro { margin: 26px 0 24px; }
.form { display: grid; gap: 16px; }
.field { display: grid; gap: 6px; }
.field input, .field textarea { width: 100%; height: 42px; margin: 0; padding: 8px 12px; border: 0; border-radius: 4px; background: #f1f1f1; box-shadow: inset 0 1px 0 #dcdcdc; font: inherit; color: #444; }
.field textarea { display: block; height: 120px; resize: vertical; }
.send { justify-self: start; margin-top: 11px; padding: 9px 35px; border-radius: 4px; background: #d13a7a; color: #fff; font-size: 15px; font-weight: 700; }

/* footer */
.footer-top { border-top: 1px solid #d13a7a; background: #1a1a1a; color: #808080; font-size: 13px; line-height: 21px; padding: 52px 0 42px; }
.footer-grid { display: grid; grid-template-columns: repeat(3, 1fr); column-gap: 45px; }
h3 { margin-bottom: 26px; color: #d0d0d0; font: 400 22px/28px "Noto Sans", sans-serif; }
.about { margin-right: -8px; }
.about p + p { margin-top: 20px; }
.about a, .news a, .footer-contacts a { color: #e0e0e0; }
.news { display: grid; gap: 17px; }
.news li { display: grid; gap: 4px; }
.news span { color: #5c5c5c; }
.footer-contacts { display: grid; gap: 12px; }
.footer-contacts li { display: flex; gap: 15px; padding-left: 1px; }
.dark { gap: 6px; margin: 42px 0 0; }
.dark a { width: 45px; height: 45px; border-color: #222; }
.footer-bottom { background: #222; color: #5c5c5c; font-size: 13px; }
.footer-row { display: flex; justify-content: space-between; align-items: center; height: 78px; padding: 2px 10px 0 0; }
.footer-nav { display: flex; gap: 20px; color: #999; }
```
